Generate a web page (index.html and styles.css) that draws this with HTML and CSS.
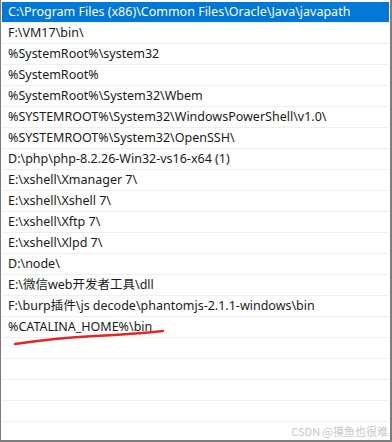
FILE: index.html
```html
<!DOCTYPE html>
<html lang="zh">
<head>
<meta charset="utf-8">
<link rel="stylesheet" href="styles.css">
</head>
<body>
<div class="box">
  <ul class="list">
    <li class="row selected">C:\Program Files (x86)\Common Files\Oracle\Java\javapath</li>
    <li class="row">F:\VM17\bin\</li>
    <li class="row">%SystemRoot%\system32</li>
    <li class="row">%SystemRoot%</li>
    <li class="row">%SystemRoot%\System32\Wbem</li>
    <li class="row">%SYSTEMROOT%\System32\WindowsPowerShell\v1.0\</li>
    <li class="row">%SYSTEMROOT%\System32\OpenSSH\</li>
    <li class="row">D:\php\php-8.2.26-Win32-vs16-x64 (1)</li>
    <li class="row">E:\xshell\Xmanager 7\</li>
    <li class="row">E:\xshell\Xshell 7\</li>
    <li class="row">E:\xshell\Xftp 7\</li>
    <li class="row">E:\xshell\Xlpd 7\</li>
    <li class="row">D:\node\</li>
    <li class="row">E:\微信web开发者工具\dll</li>
    <li class="row">F:\burp插件\js decode\phantomjs-2.1.1-windows\bin</li>
    <li class="row">%CATALINA_HOME%\bin</li>
    <li class="row"></li>
    <li class="row"></li>
    <li class="row"></li>
    <li class="row"></li>
    <li class="row"></li>
  </ul>
  <svg class="mark" width="392" height="442" viewBox="0 0 392 442">
    <path d="M15 344 Q 55 338 95 336 T 163 331" fill="none" stroke="#e3262a" stroke-width="2.4" stroke-linecap="round"/>
  </svg>
  <div class="watermark">CSDN @摸鱼也很难</div>
</div>
</body>
</html>
```
FILE: styles.css
```css
html, body {
  margin: 0;
  padding: 0;
  background: #ffffff;
}
.box {
  position: relative;
  width: 392px;
  height: 442px;
  box-sizing: border-box;
  border-left: 1px solid #7d7d7d;
  border-right: 2px solid #7d7d7d;
  border-bottom: 2px solid #7d7d7d;
  padding: 2px 1px 0 1px;
  overflow: hidden;
  background: #fff;
}
.list {
  list-style: none;
  margin: 0;
  padding: 0;
}
.row {
  height: 20px;
  line-height: 20px;
  border-bottom: 1px solid #efefef;
  padding-left: 6px;
  font-family: "Noto Sans", "Noto Sans CJK SC", sans-serif;
  font-size: 12.5px;
  color: #1a1a1a;
  white-space: nowrap;
}
.row.selected {
  background: #0078d7;
  color: #ffffff;
}
.mark {
  position: absolute;
  left: -1px;
  top: 0;
  pointer-events: none;
}
.watermark {
  position: absolute;
  right: 2px;
  bottom: 2px;
  font-family: "Noto Sans CJK SC", sans-serif;
  font-size: 11px;
  color: #c8c8c8;
  line-height: 14px;
}
```
